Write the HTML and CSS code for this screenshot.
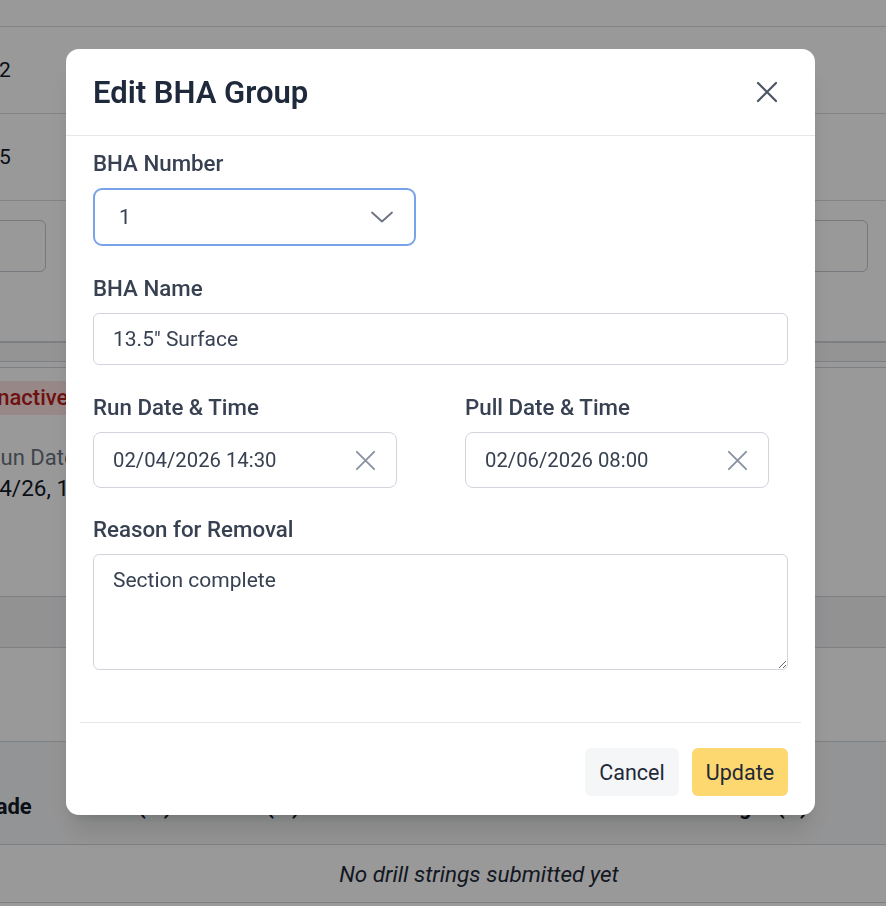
FILE: index.html
```html
<!DOCTYPE html>
<html lang="en">
<head>
<meta charset="utf-8">
<title>Edit BHA Group</title>
<link rel="stylesheet" href="styles.css">
</head>
<body>
<div class="page">
  <div class="bg-top"></div>
  <div class="bg-row"><span class="cell-num">2</span></div>
  <div class="bg-row"><span class="cell-num">5</span></div>
  <div class="bg-controls">
    <div class="bg-box bg-box-left"></div>
    <div class="bg-box bg-box-right"></div>
  </div>
  <div class="bg-sep"></div>
  <div class="bg-sep2"></div>
  <div class="bg-card">
    <span class="badge">Inactive</span>
    <div class="meta-label">Run Date</div>
    <div class="meta-value">02/04/26, 14:30</div>
  </div>
  <div class="bg-band"></div>
  <div class="bg-gap"></div>
  <div class="bg-thead">
    <span class="th">Grade</span>
    <span class="th">OD (in)</span>
    <span class="th">ID (in)</span>
    <span class="th">Thread</span>
    <span class="th">Position</span>
    <span class="th">Length (ft)</span>
  </div>
  <div class="bg-empty">No drill strings submitted yet</div>
</div>

<div class="overlay">
  <div class="modal">
    <div class="modal-header">
      <h2 class="modal-title">Edit BHA Group</h2>
      <svg class="close-icon" viewBox="0 0 24 24" width="24" height="24" aria-hidden="true">
        <path d="M3 3 L21 21 M21 3 L3 21" fill="none" stroke="currentColor" stroke-width="2.2" stroke-linecap="round"/>
      </svg>
    </div>
    <div class="modal-body">
      <div class="field">
        <div class="label">BHA Number</div>
        <div class="select">
          <span class="select-value">1</span>
          <svg class="chevron" viewBox="0 0 24 12" width="24" height="12" aria-hidden="true">
            <path d="M2 1.5 L12 10.5 L22 1.5" fill="none" stroke="currentColor" stroke-width="1.8" stroke-linecap="round" stroke-linejoin="round"/>
          </svg>
        </div>
      </div>
      <div class="field">
        <div class="label">BHA Name</div>
        <input class="input" type="text" value="13.5&quot; Surface">
      </div>
      <div class="field row">
        <div class="col">
          <div class="label">Run Date &amp; Time</div>
          <div class="date-input">
            <input class="date-text" type="text" value="02/04/2026 14:30">
            <svg class="clear-icon" viewBox="0 0 24 24" width="23" height="23" aria-hidden="true">
              <path d="M3 3 L21 21 M21 3 L3 21" fill="none" stroke="currentColor" stroke-width="2" stroke-linecap="round"/>
            </svg>
          </div>
        </div>
        <div class="col">
          <div class="label">Pull Date &amp; Time</div>
          <div class="date-input">
            <input class="date-text" type="text" value="02/06/2026 08:00">
            <svg class="clear-icon" viewBox="0 0 24 24" width="23" height="23" aria-hidden="true">
              <path d="M3 3 L21 21 M21 3 L3 21" fill="none" stroke="currentColor" stroke-width="2" stroke-linecap="round"/>
            </svg>
          </div>
        </div>
      </div>
      <div class="field last">
        <div class="label">Reason for Removal</div>
        <textarea class="textarea">Section complete</textarea>
      </div>
    </div>
    <div class="modal-footer">
      <button class="btn btn-cancel" type="button">Cancel</button>
      <button class="btn btn-update" type="button">Update</button>
    </div>
  </div>
</div>
</body>
</html>
```

FILE: styles.css
```css
* {
  box-sizing: border-box;
}

html, body {
  margin: 0;
  padding: 0;
  width: 886px;
  height: 906px;
  overflow: hidden;
}

body {
  font-family: Roboto, "Liberation Sans", Arial, sans-serif;
  background: #ffffff;
  color: #111827;
}

/* ---------- background page ---------- */
.page {
  width: 886px;
  font-size: 21px;
}

.bg-top {
  height: 27px;
  border-bottom: 1px solid #d9dce1;
}

.bg-row {
  height: 87px;
  display: flex;
  align-items: center;
  border-bottom: 1px solid #d9dce1;
}

.cell-num {
  margin-left: -1px;
  color: #111827;
}

.bg-controls {
  height: 142px;
  display: flex;
  justify-content: space-between;
  align-items: flex-start;
  padding-top: 19px;
  border-bottom: 2px solid #d1d5db;
}

.bg-box {
  height: 52px;
  border: 1px solid #c4c8cf;
  border-radius: 6px;
}

.bg-box-left {
  width: 200px;
  margin-left: -154px;
}

.bg-box-right {
  width: 300px;
  margin-right: 18px;
}

.bg-sep {
  height: 19px;
  background: #f7f7f8;
  border-bottom: 1px solid #d1d5db;
}

.bg-sep2 {
  height: 6px;
  border-bottom: 1px solid #d1d5db;
}

.bg-card {
  height: 228px;
  padding-top: 13px;
}

.badge {
  display: inline-block;
  margin-left: -19px;
  padding: 0 10px;
  height: 34px;
  line-height: 34px;
  background: #fde2e2;
  color: #b91c1c;
  font-weight: 500;
  font-size: 22px;
  border-radius: 4px;
}

.meta-label {
  margin-top: 29px;
  margin-left: -13px;
  line-height: 28px;
  font-size: 22px;
  color: #6b7280;
}

.meta-value {
  margin-top: 2px;
  margin-left: -48px;
  line-height: 28px;
  font-size: 22.5px;
  color: #111827;
}

.bg-band {
  height: 52px;
  background: #f3f4f6;
  border-top: 1px solid #d1d5db;
  border-bottom: 1px solid #d1d5db;
}

.bg-gap {
  height: 94px;
  border-bottom: 1px solid #d1d5db;
}

.bg-thead {
  height: 103px;
  display: grid;
  grid-template-columns: 130px 137px 167px 152px 144px 200px;
  align-items: end;
  padding-bottom: 23px;
  margin-left: -27px;
  background: #f6f7f8;
  border-bottom: 1px solid #d1d5db;
  font-size: 22px;
}

.th {
  font-weight: 700;
  line-height: 28px;
  color: #111827;
  white-space: nowrap;
}

.bg-empty {
  height: 58px;
  display: flex;
  align-items: center;
  justify-content: center;
  padding-left: 72px;
  font-size: 22.5px;
  font-style: italic;
  color: #1f2937;
  border-bottom: 1px solid #d1d5db;
}

/* ---------- overlay & modal ---------- */
.overlay {
  position: fixed;
  inset: 0;
  background: rgba(0, 0, 0, 0.4);
  display: flex;
  align-items: flex-start;
  justify-content: flex-start;
}

.modal {
  margin: 49px 0 0 66px;
  width: 749px;
  background: #ffffff;
  border-radius: 13px;
  box-shadow: 0 20px 25px -5px rgba(0, 0, 0, 0.12), 0 8px 10px -6px rgba(0, 0, 0, 0.12);
  color: #374151;
}

.modal-header {
  height: 87px;
  display: flex;
  align-items: center;
  justify-content: space-between;
  padding: 0 36px 0 27px;
  border-bottom: 1px solid #e5e7eb;
}

.modal-title {
  margin: 0;
  font-size: 31px;
  font-weight: 600;
  color: #1e293b;
}

.close-icon {
  color: #4b5563;
}

.modal-body {
  padding: 13px 27px 0;
}

.field {
  margin-bottom: 28px;
}

.field.last {
  margin-bottom: 0;
}

.label {
  font-size: 22.3px;
  font-weight: 500;
  line-height: 28px;
  margin-bottom: 11px;
  color: #374151;
  height: 28px;
}

.select {
  width: 323px;
  height: 58px;
  display: flex;
  align-items: center;
  justify-content: space-between;
  padding: 0 20px 0 24px;
  border: 2px solid #78a3ea;
  border-radius: 9px;
}

.select-value {
  font-size: 21px;
  color: #374151;
}

.chevron {
  color: #6b7280;
}

.input {
  display: block;
  width: 100%;
  height: 52px;
  padding: 0 19px;
  border: 1px solid #d1d5db;
  border-radius: 6px;
  font-family: inherit;
  font-size: 21px;
  color: #374151;
  outline: none;
}

.row {
  display: grid;
  grid-template-columns: 372px 1fr;
  margin-bottom: 27px;
}

.date-input {
  width: 304px;
  height: 56px;
  display: flex;
  align-items: center;
  padding: 0 19px 0 19px;
  border: 1px solid #d1d5db;
  border-radius: 8px;
}

.date-text {
  flex: 1;
  min-width: 0;
  border: none;
  outline: none;
  padding: 0;
  font-family: inherit;
  font-size: 20.3px;
  color: #374151;
  background: transparent;
}

.clear-icon {
  color: #8a93a3;
  flex: none;
}

.textarea {
  display: block;
  width: 100%;
  height: 116px;
  padding: 11px 19px;
  border: 1px solid #d1d5db;
  border-radius: 6px;
  font-family: inherit;
  font-size: 21px;
  line-height: 28px;
  color: #374151;
  resize: vertical;
  outline: none;
}

.modal-footer {
  margin: 52px 14px 0;
  border-top: 1px solid #e5e7eb;
  padding: 25px 13px 19px;
  display: flex;
  justify-content: flex-end;
  gap: 13px;
}

.btn {
  height: 48px;
  border: none;
  border-radius: 6px;
  font-family: inherit;
  font-size: 21.5px;
  color: #1f2937;
  cursor: pointer;
}

.btn-cancel {
  background: #f5f6f8;
  width: 94px;
  padding: 0;
}

.btn-update {
  background: #fdd871;
  width: 96px;
  padding: 0;
}
```
